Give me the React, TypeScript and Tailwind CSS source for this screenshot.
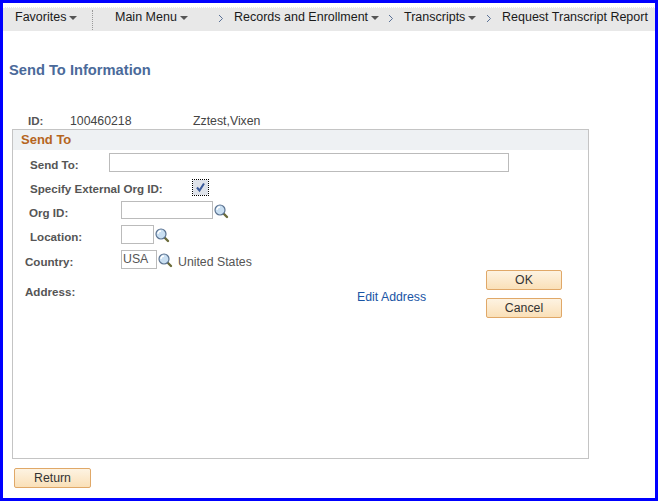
const font = { fontFamily: '"Liberation Sans", Arial, sans-serif' };

function NavArrow() {
  return <span className="ml-[3px] mt-px w-0 h-0 border-x-[4px] border-x-transparent border-t-[4px] border-t-[#555]" />;
}

function Crumb() {
  return (
    <svg width="6" height="9" viewBox="0 0 6 9" className="shrink-0 mt-[2px]">
      <path d="M1 1l3.5 3.5L1 8" fill="none" stroke="#5a7196" strokeWidth="1" />
    </svg>
  );
}

function Lookup() {
  return (
    <svg width="15" height="15" viewBox="0 0 15 15" className="shrink-0 block">
      <path d="M9.5 9.5l3.5 3.5" stroke="#6b6b3a" strokeWidth="2.4" strokeLinecap="round" />
      <circle cx="6" cy="6" r="5" fill="#c9dff2" stroke="#5b7391" strokeWidth="1.2" />
      <path d="M3 6a3 3 0 0 1 3-3" fill="none" stroke="#fff" strokeWidth="1.3" />
    </svg>
  );
}

function PsButton({ label, className }: { label: string; className: string }) {
  return (
    <button className={`h-5 rounded-[2px] border border-[#e0a868] bg-gradient-to-b from-[#fdf3e2] to-[#fae0b8] text-[12.3px] text-[#333] ${className}`}>
      {label}
    </button>
  );
}

export default function App() {
  return (
    <div style={font} className="w-[658px] h-[501px] box-border border-[3px] border-[#0000ff] bg-white flex flex-col text-[12.3px] overflow-hidden">
      <div className="pt-[4px]">
        <div className="h-[24px] pb-[4px] box-border bg-[#e8e8e8] border-t border-dotted border-white flex items-center text-[#1a1a1a] text-[12.5px]">
          <div className="ml-[12px] flex items-center w-[77px]">
            <span>Favorites</span>
            <NavArrow />
          </div>
          <div className="h-[20px] mt-[4px] border-l border-dotted border-[#999]" />
          <div className="ml-[22px] flex items-center w-[103px]">
            <span>Main Menu</span>
            <NavArrow />
          </div>
          <Crumb />
          <div className="ml-[10px] flex items-center w-[154px]">
            <span>Records and Enrollment</span>
            <NavArrow />
          </div>
          <Crumb />
          <div className="ml-[10px] flex items-center w-[82px]">
            <span>Transcripts</span>
            <NavArrow />
          </div>
          <Crumb />
          <span className="ml-[10px] whitespace-nowrap">Request Transcript Report</span>
        </div>
      </div>

      <h1 className="ml-[6px] mt-[30px] h-[18px] leading-[18px] text-[14.7px] font-bold text-[#4a6a9a]">Send To Information</h1>

      <div className="mt-[35px] h-[14px] leading-[14px] flex text-[#444]">
        <span className="ml-[25px] w-[42px] font-bold text-[11.6px] text-[#555]">ID:</span>
        <span className="w-[123px]">100460218</span>
        <span>Zztest,Vixen</span>
      </div>

      <section className="ml-[9px] mt-[1px] w-[577px] h-[330px] border border-[#c4c4c4] flex flex-col text-[#555]">
        <div className="h-[20px] leading-[20px] bg-[#eef1f3] pl-[8px] text-[13px] font-bold text-[#b5651d]">Send To</div>

        <div className="mt-[3px] h-[19px] flex items-center">
          <label className="ml-[17px] mt-[5px] w-[79px] font-bold text-[11.6px]">Send To:</label>
          <input className="w-[400px] h-[19px] border border-[#bbb] bg-white" />
        </div>

        <div className="mt-[8px] h-[14px] flex items-center">
          <label className="ml-[17px] mt-[3px] w-[163px] font-bold text-[11.6px]">Specify External Org ID:</label>
          <span className="w-[15px] h-[15px] outline-1 outline-dotted outline-black bg-[#dfe3ea] flex items-center justify-center">
            <svg width="11" height="11" viewBox="0 0 11 11">
              <path d="M2 5.5l2.5 3L9 1.5" fill="none" stroke="#3b5a9a" strokeWidth="2" />
            </svg>
          </span>
        </div>

        <div className="mt-[7px] h-[18px] flex items-center">
          <label className="ml-[16px] mt-[5px] w-[92px] font-bold text-[11.6px]">Org ID:</label>
          <input className="w-[92px] h-[18px] border border-[#bbb] bg-white" />
          <span className="ml-[1px] mt-[2px]"><Lookup /></span>
        </div>

        <div className="mt-[6px] h-[19px] flex items-center">
          <label className="ml-[17px] mt-[5px] w-[91px] font-bold text-[11.6px]">Location:</label>
          <input className="w-[33px] h-[19px] border border-[#bbb] bg-white" />
          <span className="ml-[1px] mt-[2px]"><Lookup /></span>
        </div>

        <div className="mt-[6px] h-[19px] flex items-center">
          <label className="ml-[12px] mt-[5px] w-[96px] font-bold text-[11.6px]">Country:</label>
          <div className="w-[36px] h-[19px] border border-[#bbb] pl-[1px] leading-[17px] text-[#555]">USA</div>
          <span className="ml-[1px] mt-[2px]"><Lookup /></span>
          <span className="ml-[5px] mt-[6px]">United States</span>
        </div>

        <div className="mt-px flex items-start">
          <label className="ml-[12px] mt-[13px] w-[332px] font-bold text-[11.6px]">Address:</label>
          <a className="mt-[18px] w-[129px] text-[#1a55a5]">Edit Address</a>
          <div className="flex flex-col gap-[8px]">
            <PsButton label="OK" className="w-[76px]" />
            <PsButton label="Cancel" className="w-[76px]" />
          </div>
        </div>
      </section>

      <div className="ml-[11px] mt-[9px]">
        <PsButton label="Return" className="w-[77px]" />
      </div>
    </div>
  );
}
